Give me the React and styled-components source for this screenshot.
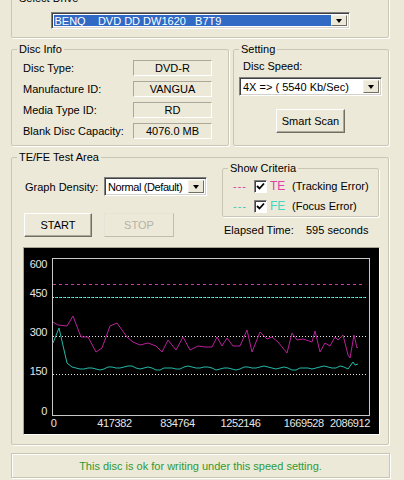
import React from "react";
import styled, { createGlobalStyle } from "styled-components";

const GlobalStyle = createGlobalStyle`
  html, body {
    margin: 0;
    padding: 0;
    background: #ece9d8;
  }
  body {
    font: 11px "Liberation Sans", Arial, sans-serif;
    color: #000;
  }
`;

const Window = styled.div`
  width: 404px;
  height: 480px;
  overflow: hidden;
  box-sizing: border-box;
  padding: 0 15px 0 11px;
  display: flex;
  flex-direction: column;
  gap: 5px;
`;

const Group = styled.fieldset`
  margin: ${(p) => p.$margin || "0"};
  padding: 0;
  min-width: 0;
  box-sizing: border-box;
  border: 1px solid #c9c6b5;
  border-radius: 2px;
  box-shadow: 1px 1px 0 #fff;
  width: ${(p) => (p.$w ? `${p.$w}px` : "auto")};
`;

const Legend = styled.legend`
  margin-left: 5px;
  padding: 0 2px;
  line-height: 13px;
  font-size: 11px;
`;

const SelectBody = styled.div`
  display: flex;
  justify-content: center;
  padding: 7px 0 8px;
`;

const TopRow = styled.div`
  display: flex;
  gap: 4px;
`;

const InfoGrid = styled.div`
  display: grid;
  grid-template-columns: 110px 79px;
  grid-auto-rows: 21px;
  align-items: center;
  padding: 1px 0 4px 11px;
`;

const ValueBox = styled.div`
  height: 16px;
  box-sizing: border-box;
  border: 1px solid;
  border-color: #aca899 #fff #fff #aca899;
  display: flex;
  align-items: center;
  justify-content: center;
`;

const SettingBody = styled.div`
  display: flex;
  flex-direction: column;
  padding: 4px 6px 0 5px;
`;

const FieldLabel = styled.div`
  line-height: 13px;
  margin: 0 0 4px 4px;
`;

const Combo = styled.div`
  box-sizing: border-box;
  width: ${(p) => p.$w}px;
  height: ${(p) => p.$h}px;
  display: flex;
  background: #fff;
  border: 1px solid;
  border-color: #808080 #fff #fff #808080;
  box-shadow: inset 1px 1px 0 #404040, inset -1px -1px 0 #d4d0c8;
  padding: 2px;
`;

const ComboText = styled.div`
  flex: 1;
  display: flex;
  align-items: center;
  padding-left: 1px;
  white-space: pre;
  overflow: hidden;
  letter-spacing: ${(p) => (p.$tight ? "-0.4px" : "0")};
  background: ${(p) => (p.$selected ? "#316ac5" : "#fff")};
  color: ${(p) => (p.$selected ? "#fff" : "#000")};
`;

const ComboButton = styled.div`
  width: 16px;
  box-sizing: border-box;
  background: #ece9d8;
  border: 1px solid;
  border-color: #f4f2e8 #716f64 #716f64 #f4f2e8;
  display: flex;
  align-items: center;
  justify-content: center;
`;

const Arrow = styled.span`
  width: 0;
  height: 0;
  border-left: 3.5px solid transparent;
  border-right: 3.5px solid transparent;
  border-top: 4px solid #000;
`;

const Button = styled.button`
  box-sizing: border-box;
  width: ${(p) => p.$w}px;
  height: ${(p) => p.$h || 24}px;
  margin: ${(p) => p.$margin || "0"};
  padding: 0;
  font: inherit;
  background: #ece9d8;
  color: ${(p) => (p.disabled ? "#b5b2a4" : "#000")};
  border: 1px solid;
  border-color: ${(p) =>
    p.disabled ? "#e6e4d8 #c0bdae #c0bdae #e6e4d8" : "#fff #716f64 #716f64 #fff"};
  box-shadow: ${(p) => (p.disabled ? "none" : "inset -1px -1px 0 #aca899")};
  align-self: ${(p) => p.$align || "auto"};
`;

const TestBody = styled.div`
  padding: 0 8px 9px 11px;
  display: flex;
  flex-direction: column;
`;

const Controls = styled.div`
  display: flex;
  height: 73px;
`;

const LeftCol = styled.div`
  width: 199px;
  display: flex;
  flex-direction: column;
`;

const DensityRow = styled.div`
  display: flex;
  align-items: center;
  margin-top: 13px;
`;

const DensityLabel = styled.span`
  width: 79px;
  margin-left: 2px;
`;

const ButtonRow = styled.div`
  display: flex;
  gap: 12px;
  margin: 17px 0 0 1px;
`;

const RightCol = styled.div`
  flex: 1;
  display: flex;
  flex-direction: column;
`;

const CriteriaBody = styled.div`
  padding: 1px 0 0 10px;
`;

const CriteriaRow = styled.div`
  display: flex;
  align-items: center;
  height: 20px;
`;

const Dash = styled.span`
  width: 21px;
  color: ${(p) => p.$color};
  letter-spacing: 1px;
`;

const Check = styled.span`
  width: 13px;
  height: 13px;
  box-sizing: border-box;
  background: #fff;
  border: 1px solid;
  border-color: #808080 #fff #fff #808080;
  box-shadow: inset 1px 1px 0 #404040;
  display: flex;
  align-items: center;
  justify-content: center;
`;

const Tag = styled.span`
  width: 22px;
  margin-left: 3px;
  font-size: 12px;
  color: ${(p) => p.$color};
`;

const Elapsed = styled.div`
  display: flex;
  margin: 7px 0 0 2px;
  line-height: 13px;
`;

const ElapsedLabel = styled.span`
  width: 82px;
`;

const ChartBox = styled.div`
  margin-top: 10px;
  height: 188px;
  box-sizing: border-box;
  background: #000;
  border: 1px solid;
  border-color: #a8a595 #fff #fff #a8a595;
`;

const Status = styled.div`
  margin: 3px -1px 0 0;
  height: 25px;
  box-sizing: border-box;
  border: 1px solid #c9c6b5;
  box-shadow: inset 1px 1px 0 #fff, 1px 1px 0 #fff;
  display: flex;
  align-items: center;
  justify-content: center;
  color: #2f9a34;
`;

const ComboBox = ({ w, h, text, selected, tight }) => (
  <Combo $w={w} $h={h}>
    <ComboText $selected={selected} $tight={tight}>
      {text}
    </ComboText>
    <ComboButton>
      <Arrow />
    </ComboButton>
  </Combo>
);

const CheckBox = () => (
  <Check>
    <svg width="9" height="9" viewBox="0 0 9 9">
      <path d="M1 4 L3.5 6.5 L8 1.5" stroke="#000" strokeWidth="1.8" fill="none" />
    </svg>
  </Check>
);

const teData = [
  [29, 74], [34, 77], [43, 78], [49, 68], [57, 89], [64, 89], [72, 104],
  [78, 100], [86, 78], [93, 75], [103, 89], [109, 94], [116, 97], [124, 95],
  [132, 98], [138, 104], [144, 92], [152, 102], [159, 89], [166, 102],
  [174, 98], [181, 99], [188, 99], [193, 89], [198, 98], [203, 90],
  [209, 98], [216, 98], [223, 82], [228, 104], [236, 84], [243, 91],
  [248, 89], [254, 94], [263, 105], [268, 85], [273, 92], [279, 91],
  [288, 94], [291, 83], [296, 104], [301, 95], [306, 98], [311, 89],
  [314, 92], [319, 87], [324, 107], [326, 110], [330, 87], [333, 100],
  [334, 99],
];

const feData = (() => {
  const pts = [[29, 95], [35, 80], [43, 115], [48, 119]];
  let i = 0;
  for (let x = 52; x <= 326; x += 4) {
    const y = 120 + Math.round(Math.sin(i * 1.3) * 1.2 + Math.sin(i * 0.37) * 0.9);
    pts.push([x, y]);
    i += 1;
  }
  pts.push([329, 114], [331, 117], [334, 116]);
  return pts;
})();

const toPoints = (arr) => arr.map(([x, y]) => `${x},${y}`).join(" ");

const yLabels = [
  ["600", 16],
  ["450", 45],
  ["300", 84],
  ["150", 123],
  ["0", 163],
];

const xLabels = [
  ["0", 29.5],
  ["417382", 90.5],
  ["834764", 153.5],
  ["1252146", 216.5],
  ["1669528", 279.8],
  ["2086912", 326],
];

const Chart = () => (
  <svg width="355" height="186" style={{ display: "block" }}>
    <g
      fontFamily='"Liberation Sans", Arial, sans-serif'
      fontSize="11"
      letterSpacing="-0.4"
      fill="#e6e6e6"
    >
      {yLabels.map(([t, y]) => (
        <text key={t} x="23" y={y + 4} textAnchor="end">
          {t}
        </text>
      ))}
      {xLabels.map(([t, x]) => (
        <text key={t} x={x} y="179" textAnchor="middle">
          {t}
        </text>
      ))}
    </g>
    <rect x="28.5" y="10.5" width="317" height="157" fill="none" stroke="#c8c8c8" />
    <line x1="29" y1="36.5" x2="339" y2="36.5" stroke="#c83ca8" strokeDasharray="3 3" />
    <line x1="29" y1="49.5" x2="343" y2="49.5" stroke="#d8eeea" strokeDasharray="1 3" />
    <line x1="31" y1="49.5" x2="343" y2="49.5" stroke="#3cc8b8" strokeDasharray="2 2" />
    <line x1="29" y1="88.5" x2="343" y2="88.5" stroke="#e8e8e0" strokeDasharray="1 2" />
    <line x1="29" y1="126.5" x2="343" y2="126.5" stroke="#e8e8e0" strokeDasharray="1 2" />
    <polyline points={toPoints(teData)} fill="none" stroke="#b8209a" strokeWidth="1" />
    <polyline points={toPoints(feData)} fill="none" stroke="#26b8a8" strokeWidth="1" />
  </svg>
);

const info = [
  ["Disc Type:", "DVD-R"],
  ["Manufacture ID:", "VANGUA"],
  ["Media Type ID:", "RD"],
  ["Blank Disc Capacity:", "4076.0 MB"],
];

export default function App() {
  return (
    <>
      <GlobalStyle />
      <Window>
        <Group $margin="-8px 0 0 0">
          <Legend>Select Drive</Legend>
          <SelectBody>
            <ComboBox w={299} h={17} text="BENQ    DVD DD DW1620   B7T9" selected />
          </SelectBody>
        </Group>

        <TopRow>
          <Group $w={218}>
            <Legend>Disc Info</Legend>
            <InfoGrid>
              {info.map(([label, value]) => (
                <React.Fragment key={label}>
                  <span>{label}</span>
                  <ValueBox>{value}</ValueBox>
                </React.Fragment>
              ))}
            </InfoGrid>
          </Group>
          <Group $w={156}>
            <Legend>Setting</Legend>
            <SettingBody>
              <FieldLabel>Disc Speed:</FieldLabel>
              <ComboBox w={143} h={19} text="4X => ( 5540 Kb/Sec)" />
              <Button $w={69} $h={24} $margin="13px 0 0 0" $align="center">
                Smart Scan
              </Button>
            </SettingBody>
          </Group>
        </TopRow>

        <Group>
          <Legend>TE/FE Test Area</Legend>
          <TestBody>
            <Controls>
              <LeftCol>
                <DensityRow>
                  <DensityLabel>Graph Density:</DensityLabel>
                  <ComboBox w={103} h={19} text="Normal (Default)" tight />
                </DensityRow>
                <ButtonRow>
                  <Button $w={68}>START</Button>
                  <Button $w={70} disabled>
                    STOP
                  </Button>
                </ButtonRow>
              </LeftCol>
              <RightCol>
                <Group $w={157} $margin="-2px 0 0 0">
                  <Legend>Show Criteria</Legend>
                  <CriteriaBody>
                    <CriteriaRow>
                      <Dash $color="#d040a8">---</Dash>
                      <CheckBox />
                      <Tag $color="#e040a8">TE</Tag>
                      <span>(Tracking Error)</span>
                    </CriteriaRow>
                    <CriteriaRow>
                      <Dash $color="#40c8b8">---</Dash>
                      <CheckBox />
                      <Tag $color="#40d8c4">FE</Tag>
                      <span>(Focus Error)</span>
                    </CriteriaRow>
                  </CriteriaBody>
                </Group>
                <Elapsed>
                  <ElapsedLabel>Elapsed Time:</ElapsedLabel>
                  <span>595 seconds</span>
                </Elapsed>
              </RightCol>
            </Controls>
            <ChartBox>
              <Chart />
            </ChartBox>
          </TestBody>
        </Group>

        <Status>This disc is ok for writing under this speed setting.</Status>
      </Window>
    </>
  );
}
